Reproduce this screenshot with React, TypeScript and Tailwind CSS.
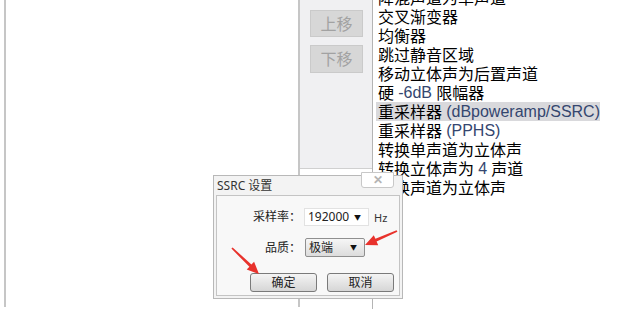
const cjk = "font-['Noto_Sans','Noto_Sans_CJK_SC',sans-serif]";

const items: { zh: string; en?: string; tail?: string; selected?: boolean }[] = [
  { zh: "降混声道为单声道" },
  { zh: "交叉渐变器" },
  { zh: "均衡器" },
  { zh: "跳过静音区域" },
  { zh: "移动立体声为后置声道" },
  { zh: "硬 ", en: "-6dB", tail: " 限幅器" },
  { zh: "重采样器 ", en: "(dBpoweramp/SSRC)", selected: true },
  { zh: "重采样器 ", en: "(PPHS)" },
  { zh: "转换单声道为立体声" },
  { zh: "转换立体声为 ", en: "4", tail: " 声道" },
  { zh: "转换声道为立体声" },
];

function Combo({ value, gray }: { value: string; gray?: boolean }) {
  return (
    <div
      className={
        gray
          ? "flex h-[19px] w-[60px] items-center justify-between rounded-[2px] border border-[#8f8f8f] bg-gradient-to-b from-[#f6f6f6] to-[#dcdcdc] pl-[3px] pr-[7px]"
          : "flex h-[18px] w-[65px] items-center justify-between border border-[#e2e2e2] bg-white pl-[3px] pr-[7px]"
      }
    >
      <span className="text-[12px] leading-none text-[#222]">{value}</span>
      <span className="text-[7px] leading-none text-[#111]">▼</span>
    </div>
  );
}

function DlgButton({ label }: { label: string }) {
  return (
    <div className="flex h-[19px] w-[67px] items-center justify-center rounded-[3px] border border-[#7a7a7a] bg-gradient-to-b from-[#f4f4f4] to-[#d6d6d6] text-[12px] leading-none text-[#222]">
      {label}
    </div>
  );
}

export default function App() {
  return (
    <div className={`relative flex h-[309px] w-[620px] overflow-hidden bg-white ${cjk}`}>
      <div className="w-[4px]" />
      <div className="h-[307px] w-[296px] border-x-2 border-[#c6c6c6] bg-white" />

      <div className="flex h-full w-[73px] flex-col border-r border-[#b4b4b4]">
        <div className="flex h-[169px] flex-col gap-[8px] border-b border-[#d0d0d0] bg-[#f0f0f2] pl-[10px] pt-[10px]">
          <div className="flex h-[27px] w-[53px] items-center justify-center border border-[#cacaca] bg-[#d7d7d7] text-[16px] text-[#a2a2a2]">
            上移
          </div>
          <div className="flex h-[28px] w-[53px] items-center justify-center border border-[#cacaca] bg-[#d7d7d7] text-[16px] text-[#a2a2a2]">
            下移
          </div>
        </div>
      </div>

      <div className="flex-1">
        <div className="-mt-[12px] pl-[3px]">
          {items.map((it) => (
            <div key={it.zh + (it.en ?? "")} className="h-[19px]">
              <div
                className={`flex h-[19px] items-center whitespace-pre pl-[2px] text-[16px] leading-none text-black ${
                  it.selected ? "w-[224px] bg-[#d9d9dc]" : ""
                }`}
              >
                <span>{it.zh}</span>
                {it.en && (
                  <span className="font-['Liberation_Sans',Arial,sans-serif] text-[#34466f]">{it.en}</span>
                )}
                {it.tail && <span>{it.tail}</span>}
              </div>
            </div>
          ))}
        </div>
      </div>

      {/* SSRC dialog, over the list */}
      <div className="absolute left-[213px] top-[175px] flex h-[124px] w-[190px] flex-col border border-[#b8b8b8] bg-[#f3f3f3] px-[2px] pb-[2px]">
        <div className="absolute left-[147px] top-[-4px] flex h-[16px] w-[33px] items-center justify-center rounded-b-[3px] border border-[#c8c8c8] bg-white text-[12px] font-bold leading-none text-[#b4b4b4]">
          ✕
        </div>
        <div className="flex h-[19px] items-center pl-[1px] text-[12px] leading-none text-[#333]">SSRC 设置</div>
        <div className="flex flex-1 flex-col border border-[#c4c4c4] bg-[#f8f8f8]">
          <div className="mt-[12px] flex items-center">
            <div className="w-[84px] text-right text-[12px] leading-none text-[#222]">采样率：</div>
            <div className="ml-[3px]">
              <Combo value="192000" />
            </div>
            <span className="ml-[5px] text-[11px] leading-none text-[#333]">Hz</span>
          </div>
          <div className="mt-[12px] flex items-center">
            <div className="w-[84px] text-right text-[12px] leading-none text-[#222]">品质：</div>
            <div className="ml-[4px]">
              <Combo value="极端" gray />
            </div>
          </div>
          <div className="mt-[16px] flex gap-[10px] pl-[33px]">
            <DlgButton label="确定" />
            <DlgButton label="取消" />
          </div>
        </div>
      </div>

      {/* red annotation arrows */}
      <svg className="pointer-events-none absolute left-0 top-0" width="620" height="309" viewBox="0 0 620 309">
        <polygon
          fill="#e8322c"
          points="397.4,231.8 376.6,241.6 378.2,245.2 365,245 373.8,235.2 375.4,238.8 396.6,230.2"
        />
        <polygon
          fill="#e8322c"
          points="231.4,248.6 249.4,266.8 246.7,269.6 259,274 254.1,261.8 251.4,264.6 232.6,247.4"
        />
      </svg>
    </div>
  );
}
